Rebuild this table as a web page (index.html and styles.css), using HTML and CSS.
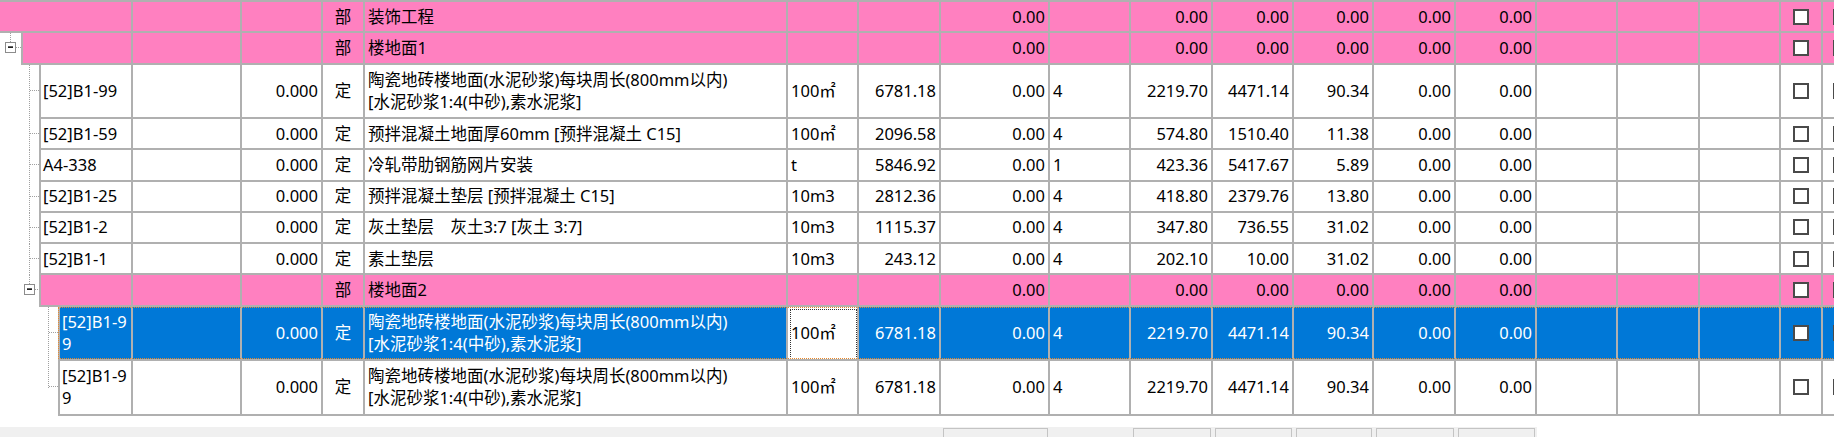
FILE: index.html
```html
<!DOCTYPE html>
<html lang="zh-CN">
<head>
    <meta charset="UTF-8">
    <meta name="viewport" content="width=device-width, initial-scale=1.0">
    <title>分部分项工程</title>
    <link rel="stylesheet" href="styles.css">
</head>
<body>
    <div class="grid">
        <!-- 装饰工程 -->
        <div class="row part">
            <div class="lead"><div class="c code root"></div></div>
            <div class="c w-b"></div>
            <div class="c w-qty"></div>
            <div class="c w-type m">部</div>
            <div class="c w-name">装饰工程</div>
            <div class="c w-unit"></div>
            <div class="c w-g"></div>
            <div class="c w-h r">0.00</div>
            <div class="c w-i"></div>
            <div class="c w-j r">0.00</div>
            <div class="c w-k r">0.00</div>
            <div class="c w-l r">0.00</div>
            <div class="c w-m r">0.00</div>
            <div class="c w-n r">0.00</div>
            <div class="c w-o"></div>
            <div class="c w-p"></div>
            <div class="c w-q"></div>
            <div class="c w-chk m"><span class="chk"></span></div>
            <div class="c w-s"><span class="chk"></span></div>
        </div>

        <!-- 楼地面1 -->
        <div class="row part">
            <div class="lead">
                <svg class="tree t1">
                    <line class="dot" x1="10.5" y1="0" x2="10.5" y2="50%"/>
                    <svg y="50%" overflow="visible">
                        <line class="dot" x1="16" y1="-1.5" x2="21" y2="-1.5"/>
                        <rect class="xbox" x="5.5" y="-6.5" width="10" height="10"/>
                        <line class="minus" x1="8" y1="-1.5" x2="13" y2="-1.5"/>
                    </svg>
                </svg>
                <div class="c code"></div>
            </div>
            <div class="c w-b"></div>
            <div class="c w-qty"></div>
            <div class="c w-type m">部</div>
            <div class="c w-name">楼地面1</div>
            <div class="c w-unit"></div>
            <div class="c w-g"></div>
            <div class="c w-h r">0.00</div>
            <div class="c w-i"></div>
            <div class="c w-j r">0.00</div>
            <div class="c w-k r">0.00</div>
            <div class="c w-l r">0.00</div>
            <div class="c w-m r">0.00</div>
            <div class="c w-n r">0.00</div>
            <div class="c w-o"></div>
            <div class="c w-p"></div>
            <div class="c w-q"></div>
            <div class="c w-chk m"><span class="chk"></span></div>
            <div class="c w-s"><span class="chk"></span></div>
        </div>

        <div class="row tall">
            <div class="lead">
                <svg class="tree t2">
                    <line class="dot" x1="29.5" y1="0" x2="29.5" y2="100%"/>
                    <svg y="50%" overflow="visible"><line class="dot" x1="29.5" y1="-1.5" x2="39" y2="-1.5"/></svg>
                </svg>
                <div class="c code">[52]B1-99</div>
            </div>
            <div class="c w-b"></div>
            <div class="c w-qty r">0.000</div>
            <div class="c w-type m">定</div>
            <div class="c w-name"><span>陶瓷地砖楼地面(水泥砂浆)每块周长(800mm以内)<br>[水泥砂浆1:4(中砂),素水泥浆]</span></div>
            <div class="c w-unit">100㎡</div>
            <div class="c w-g r">6781.18</div>
            <div class="c w-h r">0.00</div>
            <div class="c w-i">4</div>
            <div class="c w-j r">2219.70</div>
            <div class="c w-k r">4471.14</div>
            <div class="c w-l r">90.34</div>
            <div class="c w-m r">0.00</div>
            <div class="c w-n r">0.00</div>
            <div class="c w-o"></div>
            <div class="c w-p"></div>
            <div class="c w-q"></div>
            <div class="c w-chk m"><span class="chk"></span></div>
            <div class="c w-s"><span class="chk"></span></div>
        </div>

        <div class="row">
            <div class="lead">
                <svg class="tree t2">
                    <line class="dot" x1="29.5" y1="0" x2="29.5" y2="100%"/>
                    <svg y="50%" overflow="visible"><line class="dot" x1="29.5" y1="-1.5" x2="39" y2="-1.5"/></svg>
                </svg>
                <div class="c code">[52]B1-59</div>
            </div>
            <div class="c w-b"></div>
            <div class="c w-qty r">0.000</div>
            <div class="c w-type m">定</div>
            <div class="c w-name">预拌混凝土地面厚60mm [预拌混凝土 C15]</div>
            <div class="c w-unit">100㎡</div>
            <div class="c w-g r">2096.58</div>
            <div class="c w-h r">0.00</div>
            <div class="c w-i">4</div>
            <div class="c w-j r">574.80</div>
            <div class="c w-k r">1510.40</div>
            <div class="c w-l r">11.38</div>
            <div class="c w-m r">0.00</div>
            <div class="c w-n r">0.00</div>
            <div class="c w-o"></div>
            <div class="c w-p"></div>
            <div class="c w-q"></div>
            <div class="c w-chk m"><span class="chk"></span></div>
            <div class="c w-s"><span class="chk"></span></div>
        </div>

        <div class="row">
            <div class="lead">
                <svg class="tree t2">
                    <line class="dot" x1="29.5" y1="0" x2="29.5" y2="100%"/>
                    <svg y="50%" overflow="visible"><line class="dot" x1="29.5" y1="-1.5" x2="39" y2="-1.5"/></svg>
                </svg>
                <div class="c code">A4-338</div>
            </div>
            <div class="c w-b"></div>
            <div class="c w-qty r">0.000</div>
            <div class="c w-type m">定</div>
            <div class="c w-name">冷轧带肋钢筋网片安装</div>
            <div class="c w-unit">t</div>
            <div class="c w-g r">5846.92</div>
            <div class="c w-h r">0.00</div>
            <div class="c w-i">1</div>
            <div class="c w-j r">423.36</div>
            <div class="c w-k r">5417.67</div>
            <div class="c w-l r">5.89</div>
            <div class="c w-m r">0.00</div>
            <div class="c w-n r">0.00</div>
            <div class="c w-o"></div>
            <div class="c w-p"></div>
            <div class="c w-q"></div>
            <div class="c w-chk m"><span class="chk"></span></div>
            <div class="c w-s"><span class="chk"></span></div>
        </div>

        <div class="row">
            <div class="lead">
                <svg class="tree t2">
                    <line class="dot" x1="29.5" y1="0" x2="29.5" y2="100%"/>
                    <svg y="50%" overflow="visible"><line class="dot" x1="29.5" y1="-1.5" x2="39" y2="-1.5"/></svg>
                </svg>
                <div class="c code">[52]B1-25</div>
            </div>
            <div class="c w-b"></div>
            <div class="c w-qty r">0.000</div>
            <div class="c w-type m">定</div>
            <div class="c w-name">预拌混凝土垫层 [预拌混凝土 C15]</div>
            <div class="c w-unit">10m3</div>
            <div class="c w-g r">2812.36</div>
            <div class="c w-h r">0.00</div>
            <div class="c w-i">4</div>
            <div class="c w-j r">418.80</div>
            <div class="c w-k r">2379.76</div>
            <div class="c w-l r">13.80</div>
            <div class="c w-m r">0.00</div>
            <div class="c w-n r">0.00</div>
            <div class="c w-o"></div>
            <div class="c w-p"></div>
            <div class="c w-q"></div>
            <div class="c w-chk m"><span class="chk"></span></div>
            <div class="c w-s"><span class="chk"></span></div>
        </div>

        <div class="row">
            <div class="lead">
                <svg class="tree t2">
                    <line class="dot" x1="29.5" y1="0" x2="29.5" y2="100%"/>
                    <svg y="50%" overflow="visible"><line class="dot" x1="29.5" y1="-1.5" x2="39" y2="-1.5"/></svg>
                </svg>
                <div class="c code">[52]B1-2</div>
            </div>
            <div class="c w-b"></div>
            <div class="c w-qty r">0.000</div>
            <div class="c w-type m">定</div>
            <div class="c w-name">灰土垫层　灰土3:7 [灰土 3:7]</div>
            <div class="c w-unit">10m3</div>
            <div class="c w-g r">1115.37</div>
            <div class="c w-h r">0.00</div>
            <div class="c w-i">4</div>
            <div class="c w-j r">347.80</div>
            <div class="c w-k r">736.55</div>
            <div class="c w-l r">31.02</div>
            <div class="c w-m r">0.00</div>
            <div class="c w-n r">0.00</div>
            <div class="c w-o"></div>
            <div class="c w-p"></div>
            <div class="c w-q"></div>
            <div class="c w-chk m"><span class="chk"></span></div>
            <div class="c w-s"><span class="chk"></span></div>
        </div>

        <div class="row">
            <div class="lead">
                <svg class="tree t2">
                    <line class="dot" x1="29.5" y1="0" x2="29.5" y2="100%"/>
                    <svg y="50%" overflow="visible"><line class="dot" x1="29.5" y1="-1.5" x2="39" y2="-1.5"/></svg>
                </svg>
                <div class="c code">[52]B1-1</div>
            </div>
            <div class="c w-b"></div>
            <div class="c w-qty r">0.000</div>
            <div class="c w-type m">定</div>
            <div class="c w-name">素土垫层</div>
            <div class="c w-unit">10m3</div>
            <div class="c w-g r">243.12</div>
            <div class="c w-h r">0.00</div>
            <div class="c w-i">4</div>
            <div class="c w-j r">202.10</div>
            <div class="c w-k r">10.00</div>
            <div class="c w-l r">31.02</div>
            <div class="c w-m r">0.00</div>
            <div class="c w-n r">0.00</div>
            <div class="c w-o"></div>
            <div class="c w-p"></div>
            <div class="c w-q"></div>
            <div class="c w-chk m"><span class="chk"></span></div>
            <div class="c w-s"><span class="chk"></span></div>
        </div>

        <!-- 楼地面2 -->
        <div class="row part">
            <div class="lead">
                <svg class="tree t2">
                    <line class="dot" x1="29.5" y1="0" x2="29.5" y2="50%"/>
                    <svg y="50%" overflow="visible">
                        <line class="dot" x1="35" y1="-1.5" x2="39" y2="-1.5"/>
                        <rect class="xbox" x="24.5" y="-6.5" width="10" height="10"/>
                        <line class="minus" x1="27" y1="-1.5" x2="32" y2="-1.5"/>
                    </svg>
                </svg>
                <div class="c code"></div>
            </div>
            <div class="c w-b"></div>
            <div class="c w-qty"></div>
            <div class="c w-type m">部</div>
            <div class="c w-name">楼地面2</div>
            <div class="c w-unit"></div>
            <div class="c w-g"></div>
            <div class="c w-h r">0.00</div>
            <div class="c w-i"></div>
            <div class="c w-j r">0.00</div>
            <div class="c w-k r">0.00</div>
            <div class="c w-l r">0.00</div>
            <div class="c w-m r">0.00</div>
            <div class="c w-n r">0.00</div>
            <div class="c w-o"></div>
            <div class="c w-p"></div>
            <div class="c w-q"></div>
            <div class="c w-chk m"><span class="chk"></span></div>
            <div class="c w-s"><span class="chk"></span></div>
        </div>

        <div class="row tall sel">
            <div class="lead">
                <svg class="tree t3">
                    <line class="dot" x1="48.5" y1="0" x2="48.5" y2="100%"/>
                    <svg y="50%" overflow="visible"><line class="dot" x1="48.5" y1="-1.5" x2="58" y2="-1.5"/></svg>
                </svg>
                <div class="c code"><span>[52]B1-9<br>9</span></div>
            </div>
            <div class="c w-b"></div>
            <div class="c w-qty r">0.000</div>
            <div class="c w-type m">定</div>
            <div class="c w-name"><span>陶瓷地砖楼地面(水泥砂浆)每块周长(800mm以内)<br>[水泥砂浆1:4(中砂),素水泥浆]</span></div>
            <div class="c w-unit edit">100㎡</div>
            <div class="c w-g r">6781.18</div>
            <div class="c w-h r">0.00</div>
            <div class="c w-i">4</div>
            <div class="c w-j r">2219.70</div>
            <div class="c w-k r">4471.14</div>
            <div class="c w-l r">90.34</div>
            <div class="c w-m r">0.00</div>
            <div class="c w-n r">0.00</div>
            <div class="c w-o"></div>
            <div class="c w-p"></div>
            <div class="c w-q"></div>
            <div class="c w-chk m"><span class="chk"></span></div>
            <div class="c w-s"><span class="chk"></span></div>
        </div>

        <div class="row tall">
            <div class="lead">
                <svg class="tree t3">
                    <line class="dot" x1="48.5" y1="0" x2="48.5" y2="50%"/>
                    <svg y="50%" overflow="visible"><line class="dot" x1="48.5" y1="-1.5" x2="58" y2="-1.5"/></svg>
                </svg>
                <div class="c code"><span>[52]B1-9<br>9</span></div>
            </div>
            <div class="c w-b"></div>
            <div class="c w-qty r">0.000</div>
            <div class="c w-type m">定</div>
            <div class="c w-name"><span>陶瓷地砖楼地面(水泥砂浆)每块周长(800mm以内)<br>[水泥砂浆1:4(中砂),素水泥浆]</span></div>
            <div class="c w-unit">100㎡</div>
            <div class="c w-g r">6781.18</div>
            <div class="c w-h r">0.00</div>
            <div class="c w-i">4</div>
            <div class="c w-j r">2219.70</div>
            <div class="c w-k r">4471.14</div>
            <div class="c w-l r">90.34</div>
            <div class="c w-m r">0.00</div>
            <div class="c w-n r">0.00</div>
            <div class="c w-o"></div>
            <div class="c w-p"></div>
            <div class="c w-q"></div>
            <div class="c w-chk m"><span class="chk"></span></div>
            <div class="c w-s"><span class="chk"></span></div>
        </div>
    </div>

    <!-- 合计栏 -->
    <div class="foot">
        <div class="w-pre"></div>
        <div class="w-h"><div class="fbox"></div></div>
        <div class="w-i"></div>
        <div class="w-j"><div class="fbox"></div></div>
        <div class="w-k"><div class="fbox"></div></div>
        <div class="w-l"><div class="fbox"></div></div>
        <div class="w-m"><div class="fbox"></div></div>
        <div class="w-n"><div class="fbox"></div></div>
    </div>
</body>
</html>
```

FILE: styles.css
```css
body {
    margin: 0;
    width: 1834px;
    height: 437px;
    overflow: hidden;
    background-color: #fff;
    color: #000;
    font-family: "Noto Sans", "Noto Sans CJK SC", sans-serif;
    font-size: 16.5px;
}
.grid {
    width: max-content;
    border-top: 2px solid #b0b0b0;
}
.row {
    display: flex;
    height: 31.25px;
}
.row.tall {
    height: 54.5px;
}
.lead {
    display: flex;
    width: 133px;
    flex-shrink: 0;
}
.tree {
    flex-shrink: 0;
    height: 100%;
}
.t1 { width: 21px; }
.t2 { width: 39px; }
.t3 { width: 58px; }

.dot {
    stroke: #a0a0a0;
    stroke-width: 1;
    stroke-dasharray: 1 1;
    shape-rendering: crispEdges;
}
.xbox {
    fill: #fff;
    stroke: #8c8c8c;
    shape-rendering: crispEdges;
}
.minus {
    stroke: #000;
    stroke-width: 1.5;
}

.c {
    box-sizing: border-box;
    flex-shrink: 0;
    display: flex;
    align-items: center;
    padding: 0 3px;
    border-right: 2px solid #b0b0b0;
    border-bottom: 2px solid #b0b0b0;
    line-height: 22px;
    white-space: nowrap;
    overflow: hidden;
}
.c.r { justify-content: flex-end; }
.c.m { justify-content: center; }
.code {
    flex: 1;
    padding-left: 2px;
    border-left: 2px solid #b0b0b0;
}
.code.root {
    border-left: none;
}

/* column widths */
.w-pre { width: 941px; flex-shrink: 0; }
.w-b { width: 109px; }
.w-qty { width: 81px; }
.w-type { width: 42px; }
.w-name { width: 423px; }
.w-unit { width: 71px; }
.w-g { width: 82px; }
.w-h { width: 109px; }
.w-i { width: 81px; }
.w-j { width: 82px; }
.w-k { width: 81px; }
.w-l { width: 80px; }
.w-m { width: 82px; }
.w-n { width: 81px; }
.w-o { width: 81px; }
.w-p { width: 82px; }
.w-q { width: 81px; }
.w-chk { width: 42px; }
.w-s { width: 42px; padding-left: 10px; }

.chk {
    display: block;
    box-sizing: border-box;
    width: 16px;
    height: 16px;
    border: 2px solid #4a4a4a;
    background-color: #fff;
}

.part .c {
    background-color: #ff80c0;
}

.row.sel {
    position: relative;
}
.sel .c {
    background-color: #0078d7;
    color: #fff;
}
.sel .c.edit {
    background-color: #fff;
    color: #000;
    outline: 1px dotted #333;
    outline-offset: -3px;
}
.row.sel::after {
    content: "";
    position: absolute;
    left: 58px;
    right: 0;
    top: 0;
    bottom: 2px;
    border: 1px dotted #e8892c;
    pointer-events: none;
}

.foot {
    display: flex;
    width: max-content;
    height: 40px;
    margin-top: 11px;
    background-color: #f0f0f0;
}
.foot > div {
    flex-shrink: 0;
}
.fbox {
    box-sizing: border-box;
    height: 100%;
    margin: 1px 2px 0;
    border: 1px solid #c4c4c4;
    border-bottom: none;
}
```
